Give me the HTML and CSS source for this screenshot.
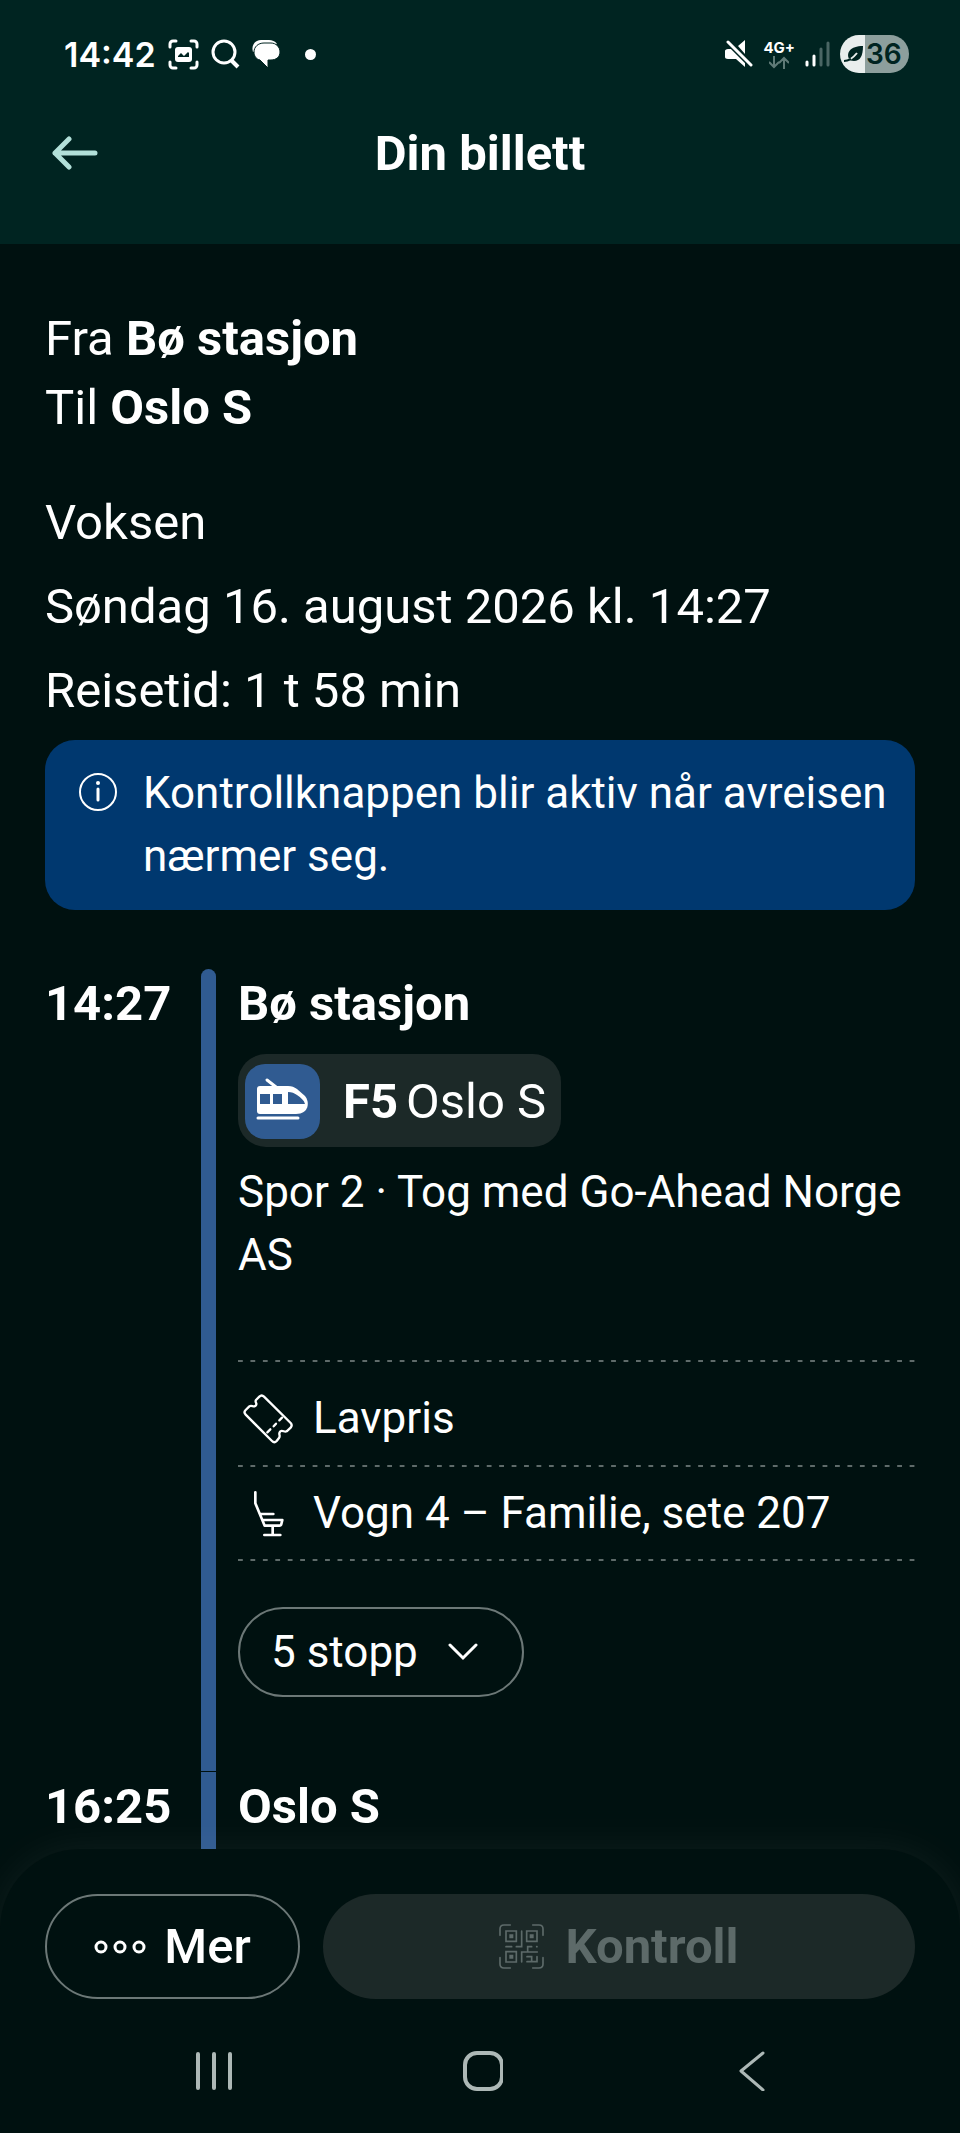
FILE: index.html
```html
<!DOCTYPE html>
<html lang="no">
<head>
  <meta charset="UTF-8" />
  <meta name="viewport" content="width=device-width, initial-scale=1.0"/>
  <title>Din billett</title>
  <link rel="stylesheet" href="styles.css">
</head>
<body>
  <div class="screen">
    <header class="header">
      <div class="status-bar">
        <div class="status-left">
          <span class="clock">14:42</span>
          <svg width="31" height="31" viewBox="0 0 31 31" fill="none" stroke="#fff" stroke-width="3" stroke-linecap="round">
            <path d="M2 8V5a3 3 0 0 1 3-3h3M23 2h3a3 3 0 0 1 3 3v3M29 23v3a3 3 0 0 1-3 3h-3M8 29H5a3 3 0 0 1-3-3v-3"/>
            <rect x="7" y="8" width="17" height="15" rx="3" fill="#fff" stroke="none"/>
            <path d="M10 18v-1l3-3 3 3 4-4 1 1v4z" fill="#002421" stroke="none"/>
          </svg>
          <svg width="29" height="30" viewBox="0 0 29 30" fill="none" stroke="#fff" stroke-width="3">
            <circle cx="13" cy="13" r="11"/>
            <path d="M20 21l7 7" stroke-width="4"/>
          </svg>
          <svg width="29" height="28" viewBox="0 0 29 28" fill="#fff">
            <path d="M1 12C-1 5 3 0 9 0h8c3 0 6 1 8 4"/>
            <path d="M12 3h7c5 0 9 4 9 9s-4 8-9 8h-3v8l-8-8C4 19 2 16 2 12c0-5 4-9 10-9z" stroke="#002421" stroke-width="1"/>
          </svg>
          <span class="dot"></span>
        </div>
        <div class="status-right">
          <svg width="28" height="28" viewBox="0 0 28 28" fill="#fff">
            <path d="M13 6l7-6v14zM3 9h5l12 12v6l-9-8H3c-2 0-3-1-3-2v-6c0-1 1-2 3-2z"/>
            <path d="M3 2l23 23" stroke="#002421" stroke-width="6"/>
            <path d="M3 2l23 23" stroke="#fff" stroke-width="3" stroke-linecap="round"/>
          </svg>
          <div class="network">
            <span>4G+</span>
            <svg width="20" height="13" viewBox="0 0 20 13" fill="none" stroke="#5f7a77" stroke-width="2">
              <path d="M5 0v11M0 6l5 5 5-5M15 13V2M10 7l5-5 5 5"/>
            </svg>
          </div>
          <svg width="25" height="26" viewBox="0 0 25 26" stroke-width="3" stroke-linecap="round">
            <path d="M2 21v3M9 15v9" stroke="#fff"/>
            <path d="M16 8v16M23 2v22" stroke="#4a6664"/>
          </svg>
          <div class="battery">
            <svg width="20" height="18" viewBox="0 0 20 18">
              <path d="M19 1c0 10-3 15-9 15-3 0-4-1-5-2C2 8 6 1 19 1z" fill="#002421"/>
              <path d="M0 16c5 0 9-3 13-8" fill="none" stroke="#e9eeed" stroke-width="2"/>
              <path d="M0 16c3 0 5-1 7-2" fill="none" stroke="#002421" stroke-width="2"/>
            </svg>
            <span>36</span>
          </div>
        </div>
      </div>
      <div class="app-bar">
        <button class="back-btn" aria-label="Tilbake">
          <svg width="46" height="34" viewBox="0 0 46 34" fill="none" stroke="#b2e0d9" stroke-width="5" stroke-linecap="round" stroke-linejoin="round">
            <path d="M43 17H3M17 3L3 17l14 14"/>
          </svg>
        </button>
        <h1>Din billett</h1>
      </div>
    </header>

    <main class="content">
      <div class="route">
        <p>Fra <strong>Bø stasjon</strong></p>
        <p>Til <strong>Oslo S</strong></p>
      </div>
      <div class="details">
        <p>Voksen</p>
        <p>Søndag 16. august 2026 kl. 14:27</p>
        <p>Reisetid: 1 t 58 min</p>
      </div>

      <div class="alert">
        <svg width="38" height="38" viewBox="0 0 38 38" fill="none" stroke="#fff" stroke-width="2">
          <circle cx="19" cy="19" r="18"/>
          <path d="M19 16v11" stroke-width="3" stroke-linecap="round"/>
          <circle cx="19" cy="10" r="2" fill="#fff" stroke="none"/>
        </svg>
        <p>Kontrollknappen blir aktiv når avreisen nærmer seg.</p>
      </div>

      <div class="timeline">
        <div class="leg">
          <div class="time">14:27</div>
          <div class="bar bar-start"></div>
          <div class="leg-info">
            <h2>Bø stasjon</h2>
            <div class="line-badge">
              <span class="line-icon">
                <svg width="75" height="75" viewBox="0 0 75 75">
                  <path d="M22 16l9 7" stroke="#fff" stroke-width="3" stroke-linecap="round"/>
                  <path d="M15 22h28c4 0 6 1 9 3l8 7c5 6 4 18-9 18H15c-2 0-3-1-3-3V25c0-2 1-3 3-3z" fill="#fff"/>
                  <path d="M15 30h10v10H15zM28 30h9v10h-9zM43 28c4 0 6 1 9 3 4 3 7 5 8 9H43z" fill="#305b91"/>
                  <path d="M13 54h40" stroke="#fff" stroke-width="3" stroke-linecap="round"/>
                </svg>
              </span>
              <strong>F5</strong>
              <span>Oslo S</span>
            </div>
            <p class="track">Spor 2 · Tog med Go-Ahead Norge AS</p>
            <ul class="facts">
              <li class="fact-ticket">
                <svg width="60" height="60" viewBox="0 0 180 180" fill="none" stroke="#fff" stroke-width="7" stroke-linecap="round" stroke-linejoin="round">
                  <path d="M64 23q7-7 14 0L158 102q6 7 0 14L146 127C139 131 134 122 127 127C119 134 129 139 123 147L116 156q-7 7-14 0L23 77q-7-7 0-14L34 52C41 47 47 56 53 50C60 43 49 40 54 33Z"/>
                  <path d="M132 86l-8 8M114 104l-7 8M97 121l-9 9"/>
                </svg>
                <span>Lavpris</span>
              </li>
              <li class="fact-seat">
                <svg width="60" height="60" viewBox="0 0 180 180" fill="none" stroke="#fff" stroke-width="8" stroke-linecap="round" stroke-linejoin="round">
                  <path d="M52 25v33L80 125h44q5 0 6-5l3-12H74M66 90h40M104 125v27M79 153h48"/>
                </svg>
                <span>Vogn 4 – Familie, sete 207</span>
              </li>
            </ul>
            <button class="stops-btn">
              5 stopp
              <svg width="30" height="18" viewBox="0 0 30 18" fill="none" stroke="#fff" stroke-width="3" stroke-linecap="round">
                <path d="M2 2l13 13L28 2"/>
              </svg>
            </button>
          </div>
        </div>
        <div class="leg">
          <div class="time">16:25</div>
          <div class="bar"></div>
          <div class="leg-info">
            <h2>Oslo S</h2>
          </div>
        </div>
      </div>
    </main>

    <footer class="footer">
      <div class="actions">
        <button class="more-btn">
          <svg width="52" height="14" viewBox="0 0 52 14" fill="none" stroke="#fff" stroke-width="3">
            <circle cx="7" cy="7" r="5"/>
            <circle cx="26" cy="7" r="5"/>
            <circle cx="45" cy="7" r="5"/>
          </svg>
          Mer
        </button>
        <button class="control-btn" disabled>
          <svg width="45" height="45" viewBox="0 0 135 135" fill="none" stroke="#5d6a69" stroke-width="5" stroke-linecap="round">
            <path d="M3 34V15Q3 3 15 3H34M101 3h19q12 0 12 12v19M132 101v19q0 12-12 12h-19M34 132H15q-12 0-12-12v-19"/>
            <path d="M23 21h29v31H21V21zM83 21h31v31H83zM21 83h31v31H21z"/>
            <path d="M31 31h12v12H31zM92 31h12v12H92zM31 92h12v12H31z" fill="#5d6a69" stroke="none"/>
            <path d="M68 21v47H52M21 68h17M68 114V84h47M86 82V68h12M113 68h1M84 98h14v15M84 113h30V98"/>
          </svg>
          Kontroll
        </button>
      </div>
      <nav class="system-nav">
        <button aria-label="Nylige apper">
          <svg width="40" height="40" viewBox="0 0 40 40" stroke="#adb8b6" stroke-width="4" stroke-linecap="round">
            <path d="M4 3v34M20 3v34M36 3v34"/>
          </svg>
        </button>
        <button aria-label="Hjem">
          <svg width="40" height="40" viewBox="0 0 40 40" fill="none" stroke="#adb8b6" stroke-width="4">
            <rect x="2" y="2" width="37" height="36" rx="12"/>
          </svg>
        </button>
        <button aria-label="Tilbake">
          <svg width="40" height="40" viewBox="0 0 40 40" fill="none" stroke="#adb8b6" stroke-width="3" stroke-linecap="round" stroke-linejoin="round">
            <path d="M31 2L9 20l22 19"/>
          </svg>
        </button>
      </nav>
    </footer>
  </div>
</body>
</html>
```

FILE: styles.css
```css
* {
  box-sizing: border-box;
}
body {
  margin: 0;
  background: #001110;
  color: white;
  font-family: Roboto, sans-serif;
  font-size: 49px;
}
h1, h2, p, ul {
  margin: 0;
  padding: 0;
}
h1, h2 {
  font-size: 49px;
  font-weight: bold;
}
svg {
  display: block;
  flex-shrink: 0;
}
button {
  font-family: inherit;
  color: inherit;
  background: none;
  border: none;
  padding: 0;
  cursor: pointer;
}
.screen {
  display: flex;
  flex-direction: column;
  height: 100vh;
}

/* Header */
.header {
  background: #002421;
  padding-bottom: 46px;
}
.status-bar {
  display: flex;
  justify-content: space-between;
  align-items: center;
  height: 108px;
  padding: 0 51px 0 64px;
  font-family: Inter, sans-serif;
}
.status-left, .status-right {
  display: flex;
  align-items: center;
  gap: 12px;
}
.status-right {
  gap: 10px;
}
.clock {
  font-size: 34px;
  font-weight: 600;
}
.dot {
  width: 11px;
  height: 11px;
  margin-left: 12px;
  border-radius: 50%;
  background: white;
}
.network {
  display: flex;
  flex-direction: column;
  align-items: center;
  font-size: 15px;
  line-height: 16px;
  font-weight: 700;
}
.battery {
  display: flex;
  align-items: center;
  gap: 2px;
  width: 69px;
  height: 38px;
  padding-left: 4px;
  border-radius: 19px;
  background: linear-gradient(90deg, #e9eeed 25px, #8d9f9d 25px);
  color: #002421;
  font-size: 28px;
  font-weight: 600;
}
.app-bar {
  display: grid;
  grid-template-columns: 1fr auto 1fr;
  align-items: center;
  height: 90px;
  padding: 0 52px;
}

/* Ticket info */
.content {
  flex: 1;
  min-height: 0;
  overflow: hidden;
  padding: 60px 45px 0;
}
.route {
  line-height: 69px;
}
.details {
  margin-top: 39px;
  line-height: 84px;
}
.alert {
  display: flex;
  align-items: flex-start;
  gap: 26px;
  margin-top: 7px;
  padding: 22px 24px 22px 34px;
  border-radius: 30px;
  background: #00386f;
  font-size: 44px;
  line-height: 63px;
}
.alert svg {
  margin-top: 11px;
}

/* Timeline */
.timeline {
  display: flex;
  flex-direction: column;
  gap: 1px;
  margin-top: 59px;
}
.leg {
  display: grid;
  grid-template-columns: 156px 15px 1fr;
}
.time {
  font-weight: bold;
  line-height: 70px;
}
.bar {
  background: #305b91;
}
.bar-start {
  border-radius: 8px 8px 0 0;
}
.leg-info {
  padding: 0 0 74px 22px;
}
.leg-info h2 {
  line-height: 70px;
}
.line-badge {
  display: inline-flex;
  align-items: center;
  height: 93px;
  margin-top: 15px;
  padding: 2px 15px 0 7px;
  border-radius: 28px;
  background: #1c2928;
  vertical-align: top;
}
.line-badge strong {
  margin: 0 8px 0 23px;
}
.line-icon {
  border-radius: 20px;
  background: #305b91;
}
.track {
  margin-top: 14px;
  font-size: 44px;
  line-height: 63px;
}
.facts {
  margin-top: 73px;
  padding-bottom: 2px;
  list-style: none;
  font-size: 44px;
  line-height: 63px;
  background: linear-gradient(90deg, #5f6b6a 5px, transparent 5px) left bottom / calc((100% - 5px) / 54) 2px repeat-x;
}
.facts li {
  display: flex;
  align-items: center;
  gap: 15px;
  background: linear-gradient(90deg, #5f6b6a 5px, transparent 5px) left top / calc((100% - 5px) / 54) 2px repeat-x;
}
.fact-ticket {
  padding: 27px 0 15px;
}
.fact-seat {
  padding: 17px 0 14px;
}
.stops-btn {
  display: flex;
  align-items: center;
  gap: 30px;
  height: 90px;
  margin-top: 46px;
  padding: 0 44px 0 31px;
  border: 2px solid #6c7877;
  border-radius: 45px;
  font-size: 44px;
}

/* Bottom actions */
.footer {
  position: relative;
  padding: 45px 45px 0;
  border-radius: 80px 80px 0 0;
  background: #001110;
  box-shadow: 0 0 40px rgba(255, 255, 255, 0.06);
}
.actions {
  display: flex;
  gap: 23px;
}
.actions button {
  display: flex;
  align-items: center;
  justify-content: center;
  height: 105px;
  border-radius: 53px;
  font-size: 49px;
}
.actions .more-btn {
  gap: 18px;
  width: 255px;
  border: 2px solid #6c7877;
  font-weight: 500;
}
.actions .control-btn {
  flex: 1;
  gap: 21px;
  background: #1c2928;
  color: #5d6a69;
  font-weight: bold;
  cursor: default;
}
.system-nav {
  display: grid;
  grid-template-columns: repeat(3, 1fr);
  padding: 52px 28px 42px 34px;
}
.system-nav button {
  display: flex;
  justify-content: center;
}
```
